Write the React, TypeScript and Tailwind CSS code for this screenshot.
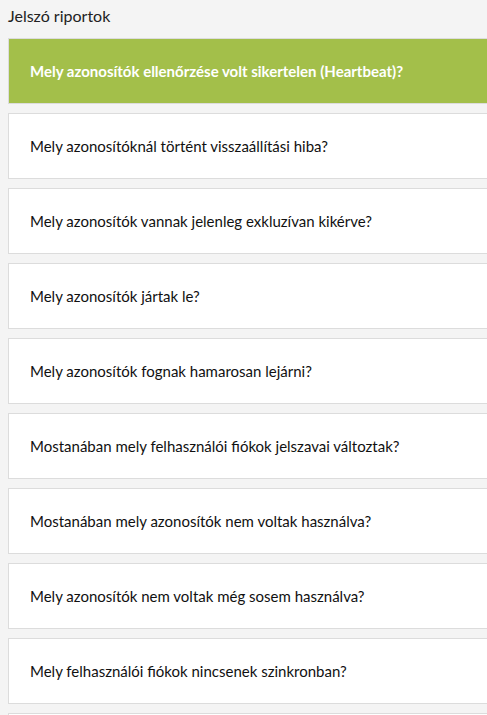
import React from 'react';

const reports = [
  'Mely azonosítók ellenőrzése volt sikertelen (Heartbeat)?',
  'Mely azonosítóknál történt visszaállítási hiba?',
  'Mely azonosítók vannak jelenleg exkluzívan kikérve?',
  'Mely azonosítók jártak le?',
  'Mely azonosítók fognak hamarosan lejárni?',
  'Mostanában mely felhasználói fiókok jelszavai változtak?',
  'Mostanában mely azonosítók nem voltak használva?',
  'Mely azonosítók nem voltak még sosem használva?',
  'Mely felhasználói fiókok nincsenek szinkronban?',
];

export default function App() {
  const active = 0;
  return (
    <div className="h-[715px] overflow-hidden bg-[#f4f4f4] pl-2 text-[#222] font-['Lato','Liberation_Sans',sans-serif]">
      <h2 className="h-[38px] pt-[5px] text-[16px] leading-[22px]">Jelszó riportok</h2>
      <div className="flex w-[500px] flex-col gap-[9px]">
        {reports.map((r, i) => (
          <button
            key={r}
            className={`flex h-[66px] items-center border px-[21px] text-left text-[15px] ${
              i === active
                ? 'border-[#dcdcdc] bg-[#a3bf4a] font-bold text-white'
                : 'border-[#dcdcdc] bg-white text-[#111]'
            }`}
          >
            {r}
          </button>
        ))}
        {/* next card, scrolled below the fold */}
        <div className="h-[66px] border border-[#dcdcdc] bg-white" />
      </div>
    </div>
  );
}
